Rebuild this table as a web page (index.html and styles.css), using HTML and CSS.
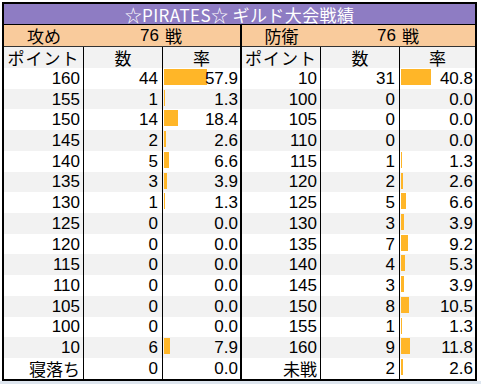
FILE: index.html
```html
<!DOCTYPE html>
<html lang="ja">
<head>
<meta charset="utf-8">
<title>☆PIRATES☆ ギルド大会戦績</title>
<link rel="stylesheet" href="styles.css">
</head>
<body>
<div class="sheet">
  <div class="title">☆PIRATES☆ ギルド大会戦績</div>
  <div class="halves">
    <div class="half left">
      <div class="summary"><span class="s1 jp">攻め</span><span class="s2">76</span><span class="s3 jp">戦</span></div>
      <div class="row head"><span class="c1 jp">ポイント</span><span class="c2 jp">数</span><span class="c3 jp">率</span></div>
      <div class="row"><span class="c1">160</span><span class="c2">44</span><span class="c3"><i class="bar" style="width:43px"></i><b>57.9</b></span></div>
      <div class="row"><span class="c1">155</span><span class="c2">1</span><span class="c3"><i class="bar" style="width:1px"></i><b>1.3</b></span></div>
      <div class="row"><span class="c1">150</span><span class="c2">14</span><span class="c3"><i class="bar" style="width:13.6px"></i><b>18.4</b></span></div>
      <div class="row"><span class="c1">145</span><span class="c2">2</span><span class="c3"><i class="bar" style="width:1.9px"></i><b>2.6</b></span></div>
      <div class="row"><span class="c1">140</span><span class="c2">5</span><span class="c3"><i class="bar" style="width:4.9px"></i><b>6.6</b></span></div>
      <div class="row"><span class="c1">135</span><span class="c2">3</span><span class="c3"><i class="bar" style="width:2.9px"></i><b>3.9</b></span></div>
      <div class="row"><span class="c1">130</span><span class="c2">1</span><span class="c3"><i class="bar" style="width:1px"></i><b>1.3</b></span></div>
      <div class="row"><span class="c1">125</span><span class="c2">0</span><span class="c3"><b>0.0</b></span></div>
      <div class="row"><span class="c1">120</span><span class="c2">0</span><span class="c3"><b>0.0</b></span></div>
      <div class="row"><span class="c1">115</span><span class="c2">0</span><span class="c3"><b>0.0</b></span></div>
      <div class="row"><span class="c1">110</span><span class="c2">0</span><span class="c3"><b>0.0</b></span></div>
      <div class="row"><span class="c1">105</span><span class="c2">0</span><span class="c3"><b>0.0</b></span></div>
      <div class="row"><span class="c1">100</span><span class="c2">0</span><span class="c3"><b>0.0</b></span></div>
      <div class="row"><span class="c1">10</span><span class="c2">6</span><span class="c3"><i class="bar" style="width:5.8px"></i><b>7.9</b></span></div>
      <div class="row"><span class="c1 jp">寝落ち</span><span class="c2">0</span><span class="c3"><b>0.0</b></span></div>
    </div>
    <div class="half right">
      <div class="summary"><span class="s1 jp">防衛</span><span class="s2">76</span><span class="s3 jp">戦</span></div>
      <div class="row head"><span class="c1 jp">ポイント</span><span class="c2 jp">数</span><span class="c3 jp">率</span></div>
      <div class="row"><span class="c1">10</span><span class="c2">31</span><span class="c3"><i class="bar" style="width:30.2px"></i><b>40.8</b></span></div>
      <div class="row"><span class="c1">100</span><span class="c2">0</span><span class="c3"><b>0.0</b></span></div>
      <div class="row"><span class="c1">105</span><span class="c2">0</span><span class="c3"><b>0.0</b></span></div>
      <div class="row"><span class="c1">110</span><span class="c2">0</span><span class="c3"><b>0.0</b></span></div>
      <div class="row"><span class="c1">115</span><span class="c2">1</span><span class="c3"><i class="bar" style="width:1px"></i><b>1.3</b></span></div>
      <div class="row"><span class="c1">120</span><span class="c2">2</span><span class="c3"><i class="bar" style="width:1.9px"></i><b>2.6</b></span></div>
      <div class="row"><span class="c1">125</span><span class="c2">5</span><span class="c3"><i class="bar" style="width:4.9px"></i><b>6.6</b></span></div>
      <div class="row"><span class="c1">130</span><span class="c2">3</span><span class="c3"><i class="bar" style="width:2.9px"></i><b>3.9</b></span></div>
      <div class="row"><span class="c1">135</span><span class="c2">7</span><span class="c3"><i class="bar" style="width:6.8px"></i><b>9.2</b></span></div>
      <div class="row"><span class="c1">140</span><span class="c2">4</span><span class="c3"><i class="bar" style="width:3.9px"></i><b>5.3</b></span></div>
      <div class="row"><span class="c1">145</span><span class="c2">3</span><span class="c3"><i class="bar" style="width:2.9px"></i><b>3.9</b></span></div>
      <div class="row"><span class="c1">150</span><span class="c2">8</span><span class="c3"><i class="bar" style="width:7.8px"></i><b>10.5</b></span></div>
      <div class="row"><span class="c1">155</span><span class="c2">1</span><span class="c3"><i class="bar" style="width:1px"></i><b>1.3</b></span></div>
      <div class="row"><span class="c1">160</span><span class="c2">9</span><span class="c3"><i class="bar" style="width:8.7px"></i><b>11.8</b></span></div>
      <div class="row"><span class="c1 jp">未戦</span><span class="c2">2</span><span class="c3"><i class="bar" style="width:1.9px"></i><b>2.6</b></span></div>
    </div>
  </div>
</div>
<div class="below"></div>
</body>
</html>
```

FILE: styles.css
```css
html, body {
  margin: 0;
  padding: 0;
  background: #ffffff;
}

body {
  font-family: "Liberation Sans", "Noto Sans CJK JP", sans-serif;
  font-size: 17px;
  color: #000;
}

.sheet {
  margin: 2px 0 0 2px;
  width: 471px;
  border: 2px solid #000;
  background: #fff;
}

.title {
  display: flex;
  align-items: center;
  justify-content: center;
  height: 20px;
  background: #8e7cc3;
  color: #fff;
  font-family: "Noto Sans CJK JP", sans-serif;
  font-size: 17px;
  line-height: 17px;
  letter-spacing: 0.4px;
  border-bottom: 1px solid #000;
}

.halves {
  display: flex;
}

.half {
  display: flex;
  flex-direction: column;
}

.half.left {
  width: 236px;
  border-right: 2px solid #000;
}

.half.right {
  width: 233px;
}

.summary,
.row {
  display: grid;
  justify-items: stretch;
}

.left .summary,
.left .row {
  grid-template-columns: 80px 79px 1fr;
}

.right .summary,
.right .row {
  grid-template-columns: 79px 79px 1fr;
}

.summary {
  height: 21px;
  background: #f9cb9c;
  border-bottom: 1px solid #333;
}

.summary > span,
.row > span {
  display: flex;
  align-items: center;
  white-space: nowrap;
  line-height: 17px;
}

.summary .s1 {
  justify-content: center;
}

.summary .s2 {
  justify-content: flex-end;
  padding-right: 4px;
}

.summary .s3 {
  justify-content: flex-start;
  padding-left: 2px;
}

.jp {
  font-family: "Noto Sans CJK JP", sans-serif;
}

.row {
  height: 20.73px;
}

.row.head {
  height: 21px;
  background: #f2f2f2;
}

.row:nth-child(even) {
  background: #f2f2f2;
}

.row .c1,
.row .c2 {
  border-right: 1px solid #000;
}

.row .c1 {
  justify-content: flex-end;
  padding-right: 3px;
}

.row .c2 {
  justify-content: flex-end;
  padding-right: 4px;
}

.row .c3 {
  position: relative;
  justify-content: flex-end;
  padding-right: 2px;
}

.row.head .c1 {
  justify-content: center;
  padding-right: 0;
  letter-spacing: 1px;
}

.row.head .c2,
.row.head .c3 {
  justify-content: center;
  padding-right: 0;
}

.bar {
  position: absolute;
  left: 1px;
  top: 1px;
  height: 16px;
  background: #ffb628;
}

.row .c3 b {
  position: relative;
  font-weight: normal;
}

.below {
  height: 6px;
  background: #dde5ee;
}
```
